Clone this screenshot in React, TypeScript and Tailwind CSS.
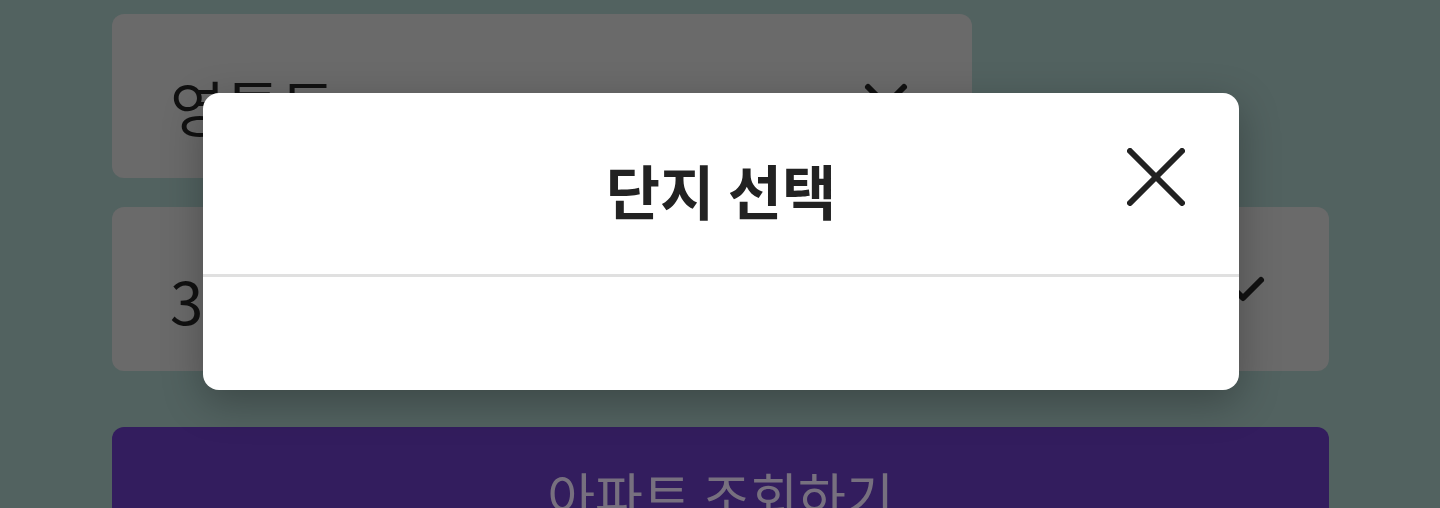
import { ChevronDown } from 'lucide-react'

const font = { fontFamily: '"Noto Sans CJK KR", "Noto Sans", sans-serif' }

const SelectBox = ({ label, className }: { label: string; className: string }) => (
  <div className={`flex h-[164px] items-center justify-between rounded-xl bg-[#6a6a6a] pl-[58px] pr-[50px] ${className}`}>
    <span className="pt-[20px] text-[60px] leading-none text-[#111]">{label}</span>
    <ChevronDown size={72} strokeWidth={2} className="text-[#111]" />
  </div>
)

const CloseIcon = () => (
  <svg width="58" height="58" viewBox="0 0 58 58" fill="none" stroke="#222" strokeWidth="6" strokeLinecap="round">
    <path d="M3 3 55 55" />
    <path d="M55 3 3 55" />
  </svg>
)

export default function App() {
  return (
    <div className="relative h-[508px] w-[1440px] overflow-hidden bg-[#526260]" style={font}>
      <div className="flex flex-col pl-[112px] pr-[111px] pt-[14px]">
        <SelectBox label="영통동" className="w-[860px]" />
        <SelectBox label="3" className="mt-[29px] w-full" />
        <button
          type="button"
          className="mt-[56px] flex h-[150px] w-full items-start justify-center rounded-xl bg-[#331d5e] pt-[42px] text-[52px] leading-none text-[#77707f]"
        >
          아파트 조회하기
        </button>
      </div>

      <div className="absolute left-[203px] top-[93px] w-[1036px] rounded-2xl bg-white shadow-[0_12px_40px_rgba(0,0,0,0.28)]">
        <div className="relative flex h-[184px] items-center justify-center border-b-[3px] border-[#e0e0e0]">
          <h2 className="pt-[12px] text-[59px] font-bold leading-none text-[#222]">단지 선택</h2>
          <button type="button" className="absolute right-[54px] top-[55px]" aria-label="닫기">
            <CloseIcon />
          </button>
        </div>
        <div className="h-[113px]" />
      </div>
    </div>
  )
}
